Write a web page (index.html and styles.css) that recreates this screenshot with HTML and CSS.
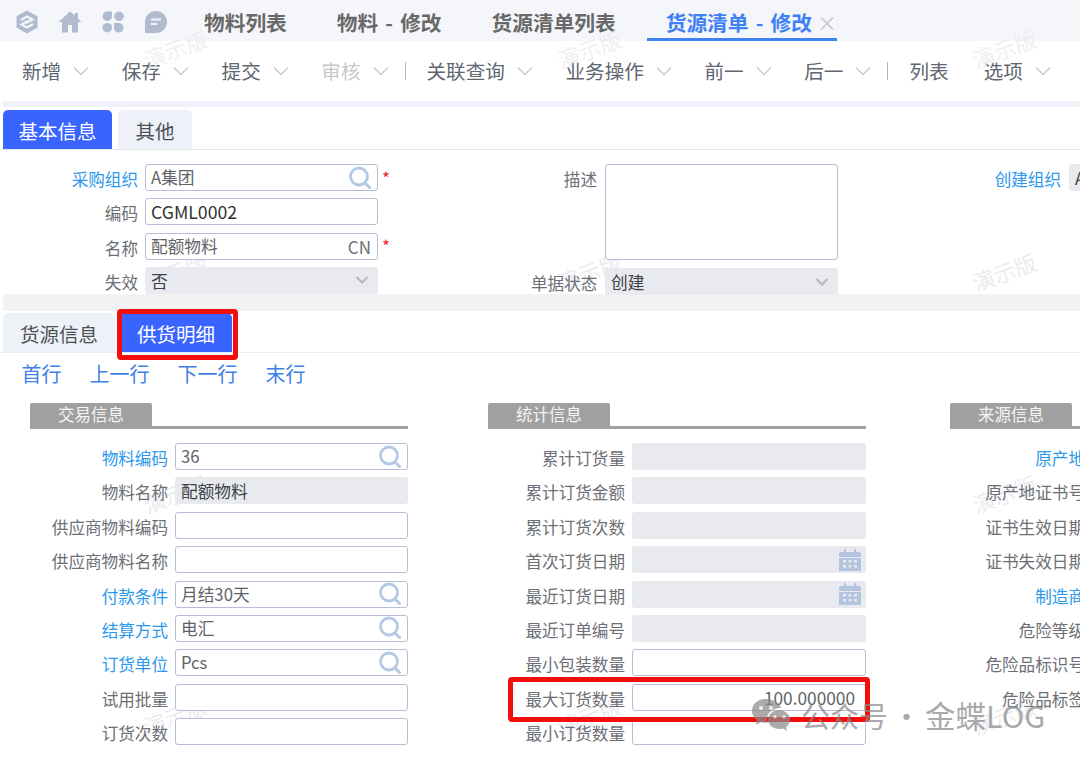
FILE: index.html
```html
<!DOCTYPE html>
<html lang="zh-CN">
<head>
<meta charset="utf-8">
<title>货源清单 - 修改</title>
<link rel="stylesheet" href="styles.css">
</head>
<body>
<svg class="defs" width="0" height="0" aria-hidden="true">
  <symbol id="chev" viewBox="0 0 16 10"><path d="M1 1.500 8 8.500 15 1.500" fill="none" stroke="#c6cad6" stroke-width="1.400"/></symbol>
  <symbol id="search" viewBox="0 0 24 24"><circle cx="11" cy="10.500" r="8.500" fill="none" stroke="#b3c9e6" stroke-width="2.800"/><path d="M17 17l4.500 4.500" stroke="#b3c9e6" stroke-width="3" stroke-linecap="round"/></symbol>
  <symbol id="down" viewBox="0 0 14 10"><path d="M1.500 2 7 7.500 12.500 2" fill="none" stroke="#b4b7bd" stroke-width="2"/></symbol>
  <symbol id="cal" viewBox="0 0 22 22"><path d="M0 5a2 2 0 0 1 2-2h3V0h2v3h8V0h2v3h3a2 2 0 0 1 2 2v3H0z" fill="#b3c4de"/><path d="M0 9h22v13H0z" fill="#b3c4de"/><g fill="#e8eaef"><rect x="4" y="11" width="3" height="2.500"/><rect x="9.500" y="11" width="3" height="2.500"/><rect x="15" y="11" width="3" height="2.500"/><rect x="4" y="16" width="3" height="2.500"/><rect x="9.500" y="16" width="3" height="2.500"/><rect x="15" y="16" width="3" height="2.500"/></g></symbol>
</svg>
<div class="page">
  <span class="wm wm-top wm-a">演示版</span><span class="wm wm-top wm-b">演示版</span><span class="wm wm-top wm-c">演示版</span>
  <span class="wm wm-d">演示版</span><span class="wm wm-e">演示版</span><span class="wm wm-f">演示版</span>
  <span class="wm wm-g">演示版</span><span class="wm wm-h">演示版</span>
  <span class="wm wm-i">演示版</span><span class="wm wm-j">演示版</span><span class="wm wm-k">演示版</span>

  <header class="topbar">
    <div class="top-icons">
      <svg class="ti" width="24" height="24" viewBox="0 0 24 24"><path d="M12 .5 22.500 6.300V17.700L12 23.500 1.500 17.700V6.300Z" fill="#b0bbd0"/><path d="M6 10 12 6.500l5.500 3-6.500 3.500M18 14 12 17.500 6.500 14.500l6.500-3.500" fill="none" stroke="#f5f6fa" stroke-width="2.200"/></svg>
      <svg class="ti" width="24" height="24" viewBox="0 0 24 24"><path d="M12 1.500 .5 12h3.500v10.500h6V15h4v7.500h6V12h3.500l-3.500-3.500V3h-3v2.500Z" fill="#b0bbd0"/></svg>
      <svg class="ti" width="24" height="24" viewBox="0 0 24 24"><g fill="#b0bbd0"><path d="M6.500 1.500H11V6a4.750 4.750 0 1 1-4.500-4.500z"/><circle cx="18" cy="6.300" r="4.800"/><circle cx="6.300" cy="17.700" r="4.800"/><path d="M13 13h5a4.800 4.800 0 1 1-5 4.800z"/></g></svg>
      <svg class="ti" width="24" height="24" viewBox="0 0 24 24"><path d="M12 1a11 11 0 0 1 0 22H1V12A11 11 0 0 1 12 1z" fill="#b0bbd0"/><path d="M7 9.500h10M7 14h6" stroke="#f5f6fa" stroke-width="2"/></svg>
    </div>
    <nav class="page-tabs">
      <span class="page-tab">物料列表</span>
      <span class="page-tab">物料 - 修改</span>
      <span class="page-tab">货源清单列表</span>
      <span class="page-tab active">货源清单 - 修改<i class="close">×</i></span>
    </nav>
  </header>

  <div class="toolbar">
    <span class="tool">新增<svg class="chev"><use href="#chev"/></svg></span>
    <span class="tool">保存<svg class="chev"><use href="#chev"/></svg></span>
    <span class="tool">提交<svg class="chev"><use href="#chev"/></svg></span>
    <span class="tool off pre">审核<svg class="chev"><use href="#chev"/></svg></span>
    <span class="sep"></span>
    <span class="tool">关联查询<svg class="chev"><use href="#chev"/></svg></span>
    <span class="tool">业务操作<svg class="chev"><use href="#chev"/></svg></span>
    <span class="tool">前一<svg class="chev"><use href="#chev"/></svg></span>
    <span class="tool pre">后一<svg class="chev"><use href="#chev"/></svg></span>
    <span class="sep"></span>
    <span class="tool plain">列表</span>
    <span class="tool">选项<svg class="chev"><use href="#chev"/></svg></span>
  </div>
  <div class="strip"></div>

  <div class="tabs main-tabs">
    <span class="tab on">基本信息</span>
    <span class="tab other">其他</span>
  </div>

  <section class="head-form">
    <div class="hcol hcol1">
      <div class="frow"><label class="link">采购组织</label><div class="box"><span class="val soft">A集团</span><svg class="ic-search"><use href="#search"/></svg></div><b class="req">*</b></div>
      <div class="frow"><label>编码</label><div class="box"><span class="val strong">CGML0002</span></div></div>
      <div class="frow"><label>名称</label><div class="box"><span class="val soft">配额物料</span><span class="cn">CN</span></div><b class="req">*</b></div>
      <div class="frow"><label>失效</label><div class="box off sel"><span class="val">否</span><svg class="ic-down"><use href="#down"/></svg></div></div>
    </div>
    <div class="hcol hcol2">
      <div class="frow tall"><label>描述</label><div class="box area"></div></div>
      <div class="frow"><label>单据状态</label><div class="box off sel"><span class="val">创建</span><svg class="ic-down"><use href="#down"/></svg></div></div>
    </div>
    <div class="hcol hcol3">
      <div class="frow"><label class="link">创建组织</label><div class="box off"><span class="val">A</span></div></div>
    </div>
  </section>
  <div class="band"></div>

  <div class="tabs sub-tabs">
    <span class="tab other first">货源信息</span>
    <span class="tab on">供货明细</span>
  </div>
  <div class="links"><a>首行</a><a>上一行</a><a>下一行</a><a>末行</a></div>

  <main class="sections">
    <div class="col col1">
      <h3 class="sec"><span>交易信息</span></h3>
      <div class="rows">
        <div class="row"><label class="link">物料编码</label><div class="box"><span class="val soft">36</span><svg class="ic-search"><use href="#search"/></svg></div></div>
        <div class="row"><label>物料名称</label><div class="box off"><span class="val">配额物料</span></div></div>
        <div class="row"><label>供应商物料编码</label><div class="box"></div></div>
        <div class="row"><label>供应商物料名称</label><div class="box"></div></div>
        <div class="row"><label class="link">付款条件</label><div class="box"><span class="val soft">月结30天</span><svg class="ic-search"><use href="#search"/></svg></div></div>
        <div class="row"><label class="link">结算方式</label><div class="box"><span class="val soft">电汇</span><svg class="ic-search"><use href="#search"/></svg></div></div>
        <div class="row"><label class="link">订货单位</label><div class="box"><span class="val soft">Pcs</span><svg class="ic-search"><use href="#search"/></svg></div></div>
        <div class="row"><label>试用批量</label><div class="box"></div></div>
        <div class="row"><label>订货次数</label><div class="box"></div></div>
      </div>
    </div>
    <div class="col col2">
      <h3 class="sec"><span>统计信息</span></h3>
      <div class="rows">
        <div class="row"><label>累计订货量</label><div class="box off"></div></div>
        <div class="row"><label>累计订货金额</label><div class="box off"></div></div>
        <div class="row"><label>累计订货次数</label><div class="box off"></div></div>
        <div class="row"><label>首次订货日期</label><div class="box off"><svg class="ic-cal"><use href="#cal"/></svg></div></div>
        <div class="row"><label>最近订货日期</label><div class="box off"><svg class="ic-cal"><use href="#cal"/></svg></div></div>
        <div class="row"><label>最近订单编号</label><div class="box off"></div></div>
        <div class="row"><label>最小包装数量</label><div class="box"></div></div>
        <div class="row"><label>最大订货数量</label><div class="box num"><span class="val soft">100.000000</span></div></div>
        <div class="row"><label>最小订货数量</label><div class="box"></div></div>
      </div>
    </div>
    <div class="col col3">
      <h3 class="sec"><span>来源信息</span></h3>
      <div class="rows">
        <div class="row"><label class="link">原产地</label></div>
        <div class="row"><label>原产地证书号</label></div>
        <div class="row"><label>证书生效日期</label></div>
        <div class="row"><label>证书失效日期</label></div>
        <div class="row"><label class="link">制造商</label></div>
        <div class="row"><label>危险等级</label></div>
        <div class="row"><label>危险品标识号</label></div>
        <div class="row"><label>危险品标签</label></div>
      </div>
    </div>
  </main>

  <div class="mark mark-tab"></div>
  <div class="mark mark-row"></div>

  <div class="wechat">
    <svg width="40" height="36" viewBox="0 0 40 36"><path d="M15 2C7 2 1 7 1 14c0 4 2 7 5 9l-1 5 5-3c2 .6 3.500.8 5 .8h1.500C16 24 16 23 16 22c0-6 5.500-11 13-11h1C28.500 6 22 2 15 2z" fill="#8b8b8b"/><path d="M28.500 13C22 13 17 17.500 17 22.500S22 32 28.500 32c1.500 0 2.500-.2 3.500-.5l4 2.500-1-4c2.500-2 4-4.500 4-7.500 0-5-5-9.500-10.500-9.500z" fill="#8b8b8b"/><g fill="#e9e9e9"><circle cx="10" cy="11" r="2"/><circle cx="20" cy="11" r="2"/><circle cx="24" cy="20" r="1.700"/><circle cx="33" cy="20" r="1.700"/></g></svg>
    <span class="wechat-text">公众号 · <span class="wechat-brand">金蝶LOG</span></span>
  </div>
</div>
</body>
</html>
```
FILE: styles.css
```css
* { box-sizing: border-box; }
html, body { margin: 0; padding: 0; background: #fff; }
body { font-family: "Noto Sans CJK SC", "Noto Sans", sans-serif; color: #666c75; }
.defs { position: absolute; }
.page { position: relative; z-index: 0; width: 1080px; height: 759px; overflow: hidden; background: #fff; }

/* top bar */
.topbar { display: flex; align-items: center; height: 41px; background: #f5f6fa; }
.top-icons { display: flex; gap: 19px; padding: 2px 0 0 15px; width: 204px; flex: none; }
.page-tabs { display: flex; height: 41px; }
.page-tab { display: block; height: 41px; line-height: 44px; font-size: 20.700px; font-weight: 700; word-spacing: 2.500px; color: #686868; margin-right: 50px; white-space: nowrap; flex: none; }
.page-tab.active { color: #3f80f7; border-bottom: 3px solid #3f80f7; margin-left: -19px; padding: 0 0 0 19px; line-height: 44px; margin-right: 0; }
.close { font-style: normal; font-weight: 400; color: #c3c6d0; font-size: 20px; margin-left: 5px; }

/* toolbar */
.toolbar { display: flex; align-items: center; height: 60px; padding-left: 22px; }
.tool { display: flex; flex: none; align-items: center; font-size: 19.600px; line-height: 28px; color: #5f6670; padding-right: 32.600px; white-space: nowrap; }
.tool.pre { padding-right: 16px; }
.tool.plain { padding-right: 35px; }
.tool.off { color: #c5c7ca; }
.chev { width: 16px; height: 10px; margin-left: 12px; }
.sep { flex: none; width: 1px; height: 18px; background: #b5b5b5; margin-right: 21px; }
.strip { height: 6px; margin-left: 3px; background: #f0f2f9; }

/* tabs */
.tabs { display: flex; padding-left: 3px; }
.main-tabs { height: 43px; padding-top: 3px; border-bottom: 1px solid #e4e6ec; }
.tab { display: block; font-size: 19.500px; line-height: 42px; height: 39px; text-align: center; border-radius: 5px 5px 0 0; }
.tab.on { width: 109px; background: #3a64ff; color: #fff; }
.tab.other { width: 74px; margin-left: 6px; background: #eef1f8; color: #4d5157; }

/* header form */
.head-form { display: flex; height: 144px; padding: 14px 0 0 0; }
.hcol { display: flex; flex-direction: column; flex: none; }
.hcol1 { width: 531px; gap: 7.300px; }
.hcol1 label { width: 138px; }
.hcol2 { width: 390px; gap: 8px; }
.hcol2 label { width: 66px; }
.hcol3 { width: 200px; }
.hcol3 label { width: 140px; }
.frow { display: flex; align-items: center; height: 27px; flex: none; }
.frow.tall { height: 96px; align-items: flex-start; }
.frow.tall label { line-height: 30px; margin-top: 0; }
.frow .box { width: 233px; margin-left: 7px; flex: none; }
.hcol2 .frow .box { margin-left: 8px; }
.hcol3 .frow .box { width: 60px; margin-left: 8px; }
.frow.tall .box { height: 96px; }
label { display: block; text-align: right; font-size: 16.600px; line-height: 27px; margin-top: 4px; white-space: nowrap; flex: none; color: #6c7076; }
label.link { color: #2c98ec; }
.box { display: flex; align-items: center; justify-content: space-between; height: 27px; padding: 0 5px; border: 1.500px solid #b6bdd6; border-radius: 3px; background: #fff; }
.box.off { border: 0; background: #e8eaef; }
.box.num { justify-content: flex-end; padding-right: 10px; }
.box.num .val { font-size: 17.300px; }
.val { font-size: 16.700px; line-height: 25px; color: #3c4148; white-space: nowrap; }
.val.soft { color: #5f6368; }
.val.strong { color: #2e3237; font-size: 17.700px; }
.box.off .val { padding-left: 1px; padding-top: 2px; }
.cn { font-size: 17px; color: #6b6f75; padding-right: 1px; }
.req { width: 10px; margin-left: 4px; color: #f02a2a; font-size: 17px; font-weight: 400; line-height: 20px; }
.ic-search { width: 24px; height: 24px; flex: none; margin-right: 0; }
.ic-down { width: 14px; height: 10px; flex: none; margin-right: 4px; }
.ic-cal { width: 22px; height: 22px; flex: none; margin-left: auto; margin-right: 0; }
.band { height: 17px; margin-left: 3px; background: #f2f2f2; }

.sub-tabs { height: 42px; padding-top: 2px; border-bottom: 1px solid #e8edf5; }
.sub-tabs .tab.other.first { width: 112px; margin-left: 0; margin-right: 5px; }
.sub-tabs .tab.on { width: 112px; }

.links { display: flex; gap: 28px; height: 50px; padding: 6px 0 0 21.500px; font-size: 20px; line-height: 30px; color: #3f7fe8; }

/* sections */
.sections { display: flex; padding-left: 30px; }
.col { flex: none; width: 378px; margin-right: 80px; }
.col2 { margin-right: 84px; }
.sec { margin: 0; height: 26px; border-bottom: 3px solid #a0a0a0; font-weight: 400; font-size: 16.500px; }
.sec span { display: block; width: 122px; height: 23px; background: #a0a0a0; color: #f4f4f4; text-align: center; line-height: 23px; border-radius: 2px 2px 0 0; }
.rows { display: flex; flex-direction: column; gap: 7.400px; margin-top: 14px; }
.row { display: flex; height: 27px; align-items: center; gap: 7px; flex: none; }
.row label { width: 138px; line-height: 27px; }
.row .box { width: 233px; flex: none; }
.col2 .row label { width: 137px; }
.col2 .row { gap: 7px; }
.col2 .row .box { width: 234px; }
.col3 .row label { width: 135px; }

/* overlays */
.mark { position: absolute; border: 5px solid #f40d0d; border-radius: 4px; }
.mark-tab { left: 117px; top: 309px; width: 121px; height: 51px; }
.mark-row { left: 508px; top: 677px; width: 362px; height: 45px; }
.wm { position: absolute; z-index: -1; font-size: 22px; line-height: 26px; color: #ebecf0; transform: rotate(-20deg); white-space: nowrap; }
.wm-top { z-index: 1; opacity: .75; }
.wm-a { left: 142px; top: 35px; }
.wm-b { left: 556px; top: 35px; }
.wm-c { left: 971px; top: 35px; }
.wm-d { left: 142px; top: 258px; }
.wm-e { left: 556px; top: 258px; }
.wm-f { left: 971px; top: 258px; }
.wm-g { left: 142px; top: 480px; }
.wm-h { left: 971px; top: 480px; }
.wm-i { left: 142px; top: 702px; }
.wm-j { left: 556px; top: 702px; }
.wm-k { left: 971px; top: 702px; }
.wechat { position: absolute; left: 751px; top: 696px; display: flex; align-items: center; gap: 10px; opacity: .72; color: #8a8a8a; font-size: 29px; line-height: 38px; white-space: nowrap; }
.wechat-text { word-spacing: -2.500px; }
.wechat-brand { font-size: 30.500px; }
```
